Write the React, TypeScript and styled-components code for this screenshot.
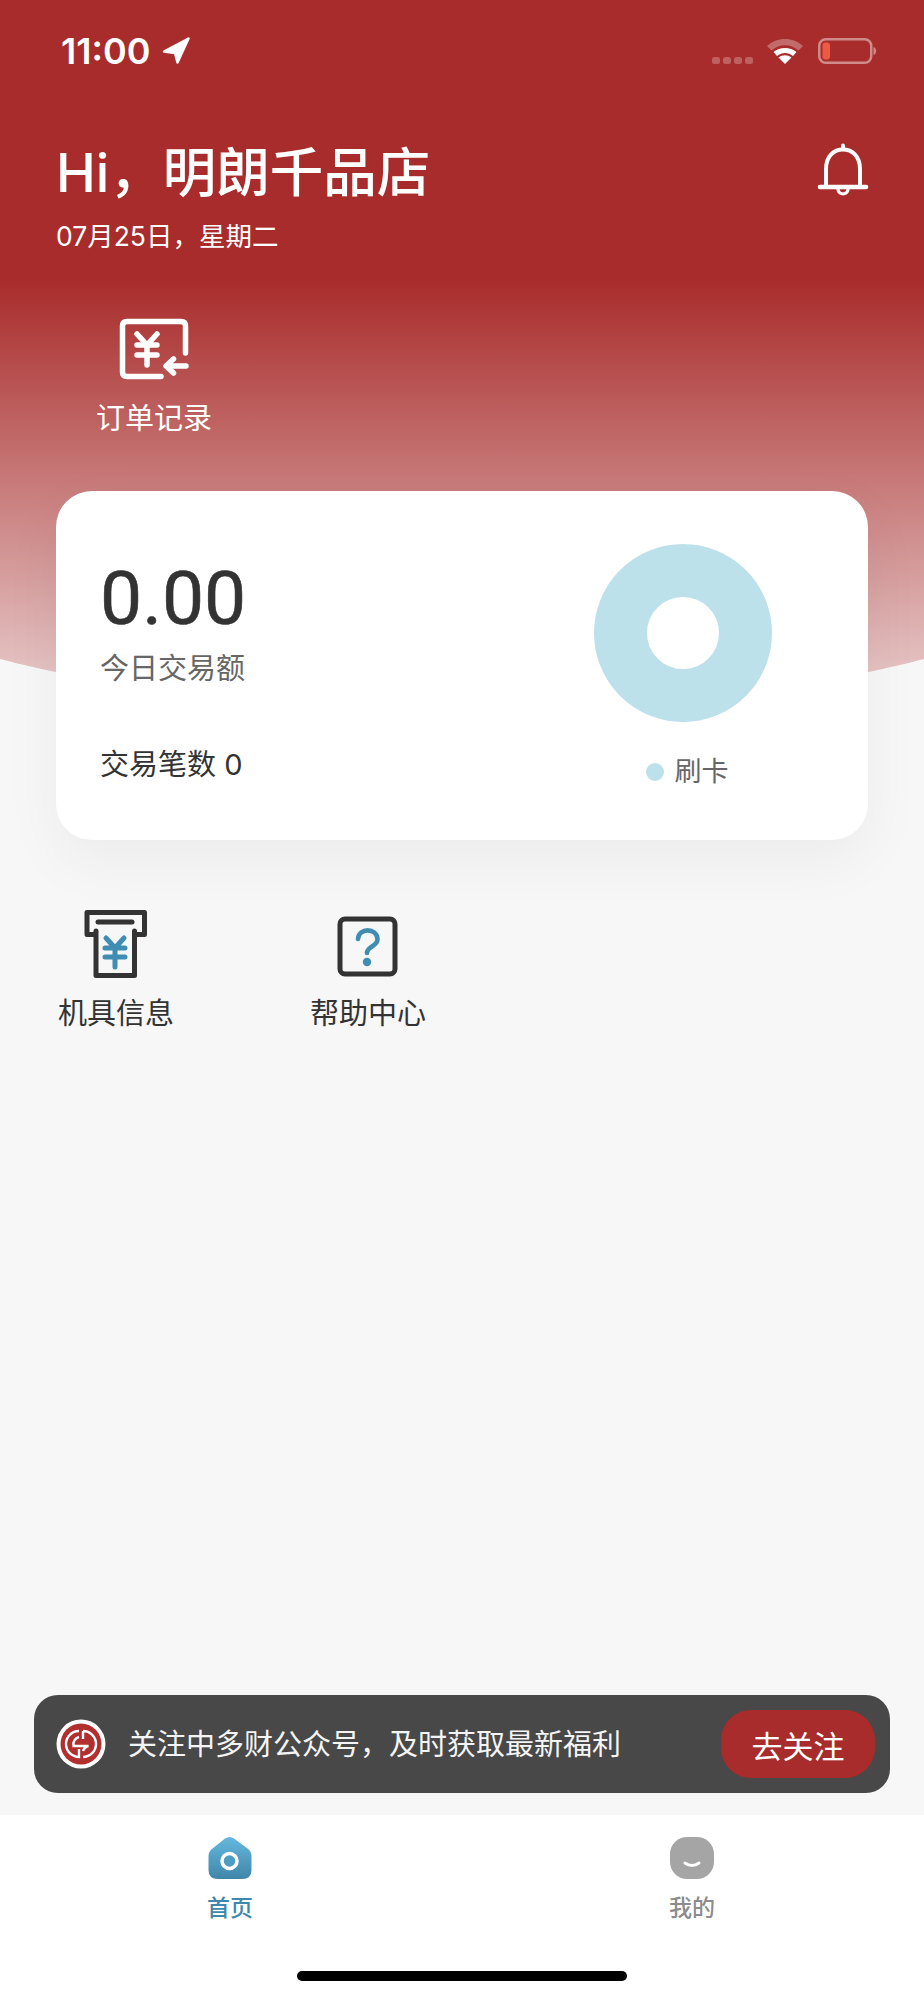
import React from 'react';
import styled, { createGlobalStyle } from 'styled-components';

const GlobalStyle = createGlobalStyle`
  html, body {
    margin: 0;
    padding: 0;
    background: #f7f7f7;
  }
  * {
    box-sizing: border-box;
  }
`;

const Page = styled.div`
  position: relative;
  display: flex;
  flex-direction: column;
  width: 924px;
  height: 2000px;
  overflow: hidden;
  background: #f7f7f7;
  font-family: Inter, "Noto Sans CJK SC", sans-serif;
  color: #333;
`;

/* the red backdrop sits behind the header and the card */
const Backdrop = styled.div`
  position: absolute;
  top: 0;
  left: -338px;
  width: 1600px;
  height: 712px;
  border-radius: 0 0 800px 800px / 0 0 288px 288px;
  background: linear-gradient(180deg, #a82c2b 0, #a82c2b 280px, #e3bebe 660px, #eed6d6 712px);
`;

const Content = styled.div`
  position: relative;
  display: flex;
  flex-direction: column;
  flex: 1;
`;

const StatusBar = styled.div`
  display: flex;
  align-items: center;
  justify-content: space-between;
  height: 50px;
  margin-top: 26px;
  padding: 0 47px 0 61px;
  color: #fff;
`;

const Clock = styled.div`
  display: flex;
  align-items: center;
  gap: 12px;
  font-size: 36px;
  font-weight: 600;
  line-height: 50px;
`;

const StatusIcons = styled.div`
  display: flex;
  align-items: center;
`;

const Greeting = styled.header`
  display: flex;
  justify-content: space-between;
  align-items: flex-start;
  margin-top: 63px;
  padding: 0 53px 0 56px;
  color: #fff;
`;

const Title = styled.h1`
  margin: 0;
  font-size: 53.5px;
  font-weight: 500;
  line-height: 68px;
`;

const DateLine = styled.div`
  margin-top: 11px;
  font-size: 26.5px;
  line-height: 36px;
`;

const BellWrap = styled.div`
  margin-top: 4px;
  height: 54px;
`;

const QuickAction = styled.div`
  display: flex;
  flex-direction: column;
  align-items: center;
  width: 114px;
  margin: 62px 0 0 97px;
  color: #fff;
`;

const ActionLabel = styled.div`
  margin-top: 17px;
  font-size: 29px;
  line-height: 40px;
  white-space: nowrap;
`;

const Card = styled.section`
  display: flex;
  justify-content: space-between;
  height: 349px;
  margin: 52px 56px 0;
  padding: 53px 96px 0 44px;
  border-radius: 36px;
  background: #fff;
  box-shadow: 0 20px 60px rgba(0, 0, 0, 0.05);
`;

const Totals = styled.div`
  display: flex;
  flex-direction: column;
  margin-top: 18px;
`;

const Amount = styled.div`
  font-family: Roboto, sans-serif;
  font-size: 75px;
  font-weight: 400;
  line-height: 72px;
  color: #333;
  -webkit-text-stroke: 0.6px #333;
`;

const AmountLabel = styled.div`
  margin-top: 15px;
  font-size: 29px;
  line-height: 40px;
  color: #666;
`;

const Count = styled.div`
  margin-top: 56px;
  font-size: 29px;
  line-height: 40px;
  color: #333;
`;

const ChartBox = styled.div`
  display: flex;
  flex-direction: column;
  align-items: center;
`;

const Legend = styled.div`
  display: flex;
  align-items: center;
  gap: 11px;
  margin: 30px 0 0 8px;
  font-size: 27px;
  line-height: 40px;
  color: #666;
`;

const LegendDot = styled.span`
  width: 18px;
  height: 18px;
  border-radius: 50%;
  background: #bde1ea;
`;

const Tools = styled.div`
  display: grid;
  grid-template-columns: repeat(3, 252px);
  margin-top: 69px;
  padding-left: 59px;
`;

const Tool = styled.div`
  display: flex;
  flex-direction: column;
  align-items: center;
  width: 114px;
`;

const ToolIcon = styled.div`
  display: flex;
  align-items: flex-end;
  justify-content: center;
  height: 70px;
`;

const ToolLabel = styled.div`
  margin-top: 15px;
  font-size: 29px;
  line-height: 40px;
  color: #333;
  white-space: nowrap;
`;

const Follow = styled.div`
  display: flex;
  align-items: center;
  height: 98px;
  margin: auto 34px 22px;
  padding: 0 15px 0 22px;
  border-radius: 24px;
  background: #484848;
`;

const FollowText = styled.div`
  flex: 1;
  margin: 0 0 4px 22px;
  font-size: 29px;
  color: #f4f4f4;
  white-space: nowrap;
`;

const FollowButton = styled.button`
  width: 154px;
  height: 68px;
  border: 0;
  border-radius: 30px;
  background: #a82c2b;
  color: #fff;
  font-family: inherit;
  font-size: 31px;
`;

const TabBar = styled.nav`
  position: relative;
  display: grid;
  grid-template-columns: 1fr 1fr;
  height: 185px;
  padding: 21px 0 0 0;
  background: #fff;
`;

const Tab = styled.div<{ $active?: boolean }>`
  display: flex;
  flex-direction: column;
  align-items: center;
  padding-right: 2px;
  font-size: 23px;
  font-weight: 500;
  line-height: 34px;
  color: ${(p) => (p.$active ? '#3f88ad' : '#8c8c8c')};
`;

const TabLabel = styled.div`
  margin-top: 11px;
`;

const HomeIndicator = styled.div`
  position: absolute;
  left: 297px;
  bottom: 19px;
  width: 330px;
  height: 10px;
  border-radius: 5px;
  background: #000;
`;

const LocationArrow = () => (
  <svg width="28" height="28" viewBox="0 0 28 28">
    <path
      d="M26.500 1.500 L15.500 25.500 L13 16 L2 14.500 Z"
      fill="#fff"
      stroke="#fff"
      strokeWidth="2.500"
      strokeLinejoin="round"
    />
  </svg>
);

const CellDots = () => (
  <svg width="41" height="7" viewBox="0 0 41 7" style={{ marginTop: 19 }}>
    {[0, 11, 22, 33].map((x) => (
      <rect key={x} x={x} y="0" width="8" height="7" rx="2.500" fill="#fff" opacity="0.25" />
    ))}
  </svg>
);

const Wifi = () => (
  <svg width="36" height="26" viewBox="0 0 36 26" style={{ marginLeft: 14 }}>
    <path d="M0 8 C10 -1.500 26 -1.500 36 8 L31.500 12.500 C23.500 5.500 12.500 5.500 4.500 12.500 Z" fill="#fff" opacity="0.3" />
    <path d="M6.500 14 C13 8.500 23 8.500 29.500 14 L26 18 C21 14 15 14 10 18 Z" fill="#fff" />
    <path d="M11.500 19.500 C15.500 16.500 20.500 16.500 24.500 19.500 L18 26 Z" fill="#fff" />
  </svg>
);

const Battery = () => (
  <svg width="59" height="26" viewBox="0 0 59 26" style={{ marginLeft: 15 }}>
    <rect x="1.250" y="1.250" width="52" height="23.500" rx="6.500" fill="none" stroke="#fff" strokeOpacity="0.45" strokeWidth="2.500" />
    <rect x="4.500" y="4.500" width="7.500" height="17" rx="3" fill="#ef5a45" />
    <path d="M55.500 9 C59 10 59 16 55.500 17 Z" fill="#fff" opacity="0.45" />
  </svg>
);

const Bell = () => (
  <svg width="54" height="54" viewBox="0 0 54 54" fill="none" stroke="#fff" strokeLinecap="round">
    <path d="M9 43 V26 C9 13 17 6.500 26 6.500 C35 6.500 43 13 43 26 V43" strokeWidth="4" />
    <path d="M3 44 H49" strokeWidth="4.600" />
    <path d="M26 2.500 V6" strokeWidth="4" />
    <path d="M21 46.500 C21.500 52.500 30.500 52.500 31 46.500" strokeWidth="3.200" />
  </svg>
);

const OrderIcon = () => (
  <svg width="74" height="66" viewBox="117 315 74 66" fill="none" stroke="#fff" strokeWidth="5.500" strokeLinecap="round" strokeLinejoin="round">
    <path d="M185.500 352 V325 Q185.500 320.500 181 320.500 H127 Q122.500 320.500 122.500 325 V371 Q122.500 375.500 127 375.500 H161" />
    <path d="M137 333 L147 344 L157 333 M137 344 H157 M137 354 H157 M147 344 V364" />
    <path d="M186 365 H167 M173.500 358 L166 365 L173.500 372" />
  </svg>
);

const MachineIcon = () => (
  <svg width="66" height="70" viewBox="84 909 66 70" fill="none" strokeLinecap="round" strokeLinejoin="round">
    <path d="M97 931 V975.500 H135.500 V931 M95 934.500 H88 V912.500 H145.500 V934.500 H138" stroke="#333" strokeWidth="5" />
    <path d="M99 922 H133" stroke="#333" strokeWidth="5" />
    <path d="M107 938 L116 948 L125 938 M106 948 H126 M106 957 H126 M116 948 V967" stroke="#3f8db3" strokeWidth="5" />
  </svg>
);

const HelpIcon = () => (
  <svg width="64" height="64" viewBox="337 914 64 64" fill="none" strokeLinecap="round">
    <rect x="341" y="918" width="55" height="55" rx="5" stroke="#333" strokeWidth="5" />
    <path d="M359 938 C359.500 926.500 378 926.500 378.500 938 C378.500 946 368 945 368 952" stroke="#3f8db3" strokeWidth="4.600" />
    <circle cx="368" cy="961" r="4.200" fill="#3f8db3" />
  </svg>
);

const Donut = () => (
  <svg width="178" height="178" viewBox="0 0 178 178">
    <circle cx="89" cy="89" r="62.500" fill="none" stroke="#bde1ea" strokeWidth="53" />
  </svg>
);

const BrandLogo = () => (
  <svg width="50" height="50" viewBox="0 0 50 50" fill="none">
    <circle cx="25" cy="25" r="24.500" fill="#fff" />
    <circle cx="25" cy="25" r="20.500" fill="#b22f30" />
    <path
      d="M23 12 A13 13 0 0 0 23 38 V30 M27 12 A13 13 0 0 1 27 38 M27 12 V20 M23 18 A7.500 7.500 0 0 0 17.500 27 H32.500 A7.500 7.500 0 0 0 27 32"
      stroke="#fff"
      strokeWidth="2.400"
    />
  </svg>
);

const HomeTabIcon = () => (
  <svg width="44" height="44" viewBox="0 0 44 44">
    <defs>
      <linearGradient id="homeFill" x1="0" y1="0" x2="0" y2="1">
        <stop offset="0" stopColor="#66b8de" />
        <stop offset="1" stopColor="#3f86a9" />
      </linearGradient>
    </defs>
    <path d="M17 2.500 Q21.500 -0.500 26 2.500 L39.500 12.500 Q43.500 15.500 43.500 20 V34 Q43.500 43 34 43 H10 Q0.500 43 0.500 34 V20 Q0.500 15.500 4.500 12.500 Z" fill="url(#homeFill)" />
    <circle cx="21.500" cy="25" r="7.500" fill="#4f9cc2" stroke="#fff" strokeWidth="3.500" />
  </svg>
);

const MeTabIcon = () => (
  <svg width="46" height="44" viewBox="0 0 46 44">
    <rect x="1" y="1" width="44" height="42" rx="17" fill="#a5a5a5" />
    <path d="M16 27 Q23 32 30 27" fill="none" stroke="#fff" strokeWidth="3" strokeLinecap="round" />
  </svg>
);

export default function App() {
  return (
    <Page>
      <GlobalStyle />
      <Backdrop />
      <Content>
        <StatusBar>
          <Clock>
            11:00
            <LocationArrow />
          </Clock>
          <StatusIcons>
            <CellDots />
            <Wifi />
            <Battery />
          </StatusIcons>
        </StatusBar>

        <Greeting>
          <div>
            <Title>Hi，明朗千品店</Title>
            <DateLine>07月25日，星期二</DateLine>
          </div>
          <BellWrap>
            <Bell />
          </BellWrap>
        </Greeting>

        <QuickAction>
          <OrderIcon />
          <ActionLabel>订单记录</ActionLabel>
        </QuickAction>

        <Card>
          <Totals>
            <Amount>0.00</Amount>
            <AmountLabel>今日交易额</AmountLabel>
            <Count>交易笔数 0</Count>
          </Totals>
          <ChartBox>
            <Donut />
            <Legend>
              <LegendDot />
              刷卡
            </Legend>
          </ChartBox>
        </Card>

        <Tools>
          <Tool>
            <ToolIcon>
              <MachineIcon />
            </ToolIcon>
            <ToolLabel>机具信息</ToolLabel>
          </Tool>
          <Tool>
            <ToolIcon>
              <HelpIcon />
            </ToolIcon>
            <ToolLabel>帮助中心</ToolLabel>
          </Tool>
        </Tools>

        <Follow>
          <BrandLogo />
          <FollowText>关注中多财公众号，及时获取最新福利</FollowText>
          <FollowButton>去关注</FollowButton>
        </Follow>

        <TabBar>
          <Tab $active>
            <HomeTabIcon />
            <TabLabel>首页</TabLabel>
          </Tab>
          <Tab>
            <MeTabIcon />
            <TabLabel>我的</TabLabel>
          </Tab>
          <HomeIndicator />
        </TabBar>
      </Content>
    </Page>
  );
}
